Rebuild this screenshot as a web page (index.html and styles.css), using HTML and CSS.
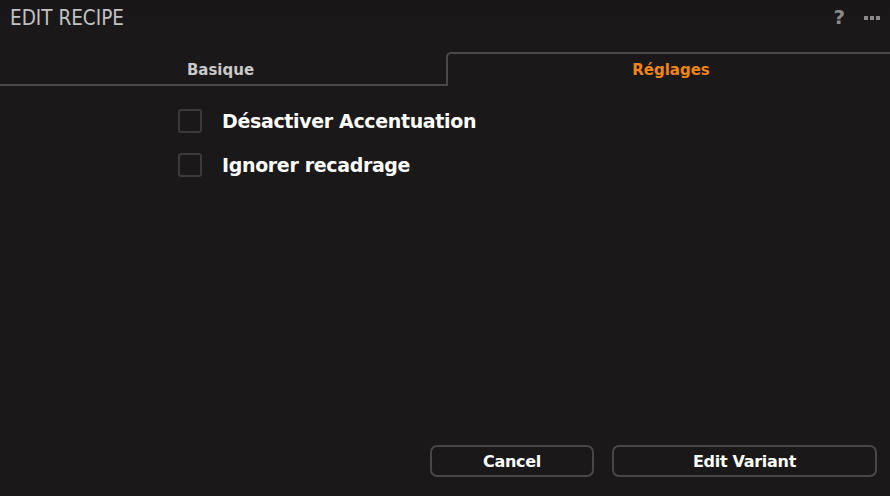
FILE: index.html
```html
<!DOCTYPE html>
<html lang="fr">
<head>
<meta charset="utf-8">
<title>Edit Recipe</title>
<link rel="stylesheet" href="styles.css">
</head>
<body>
<div class="panel">
  <header class="titlebar">
    <span class="title">EDIT RECIPE</span>
    <div class="tools">
      <span class="help">?</span>
      <svg class="more" width="16" height="4" viewBox="0 0 16 4"><rect x="0" y="0" width="4" height="4" fill="#8a8a8a"/><rect x="6" y="0" width="4" height="4" fill="#8a8a8a"/><rect x="12" y="0" width="4" height="4" fill="#8a8a8a"/></svg>
    </div>
  </header>
  <nav class="tabs">
    <div class="tab tab-left"><span>Basique</span></div>
    <div class="tab tab-active"><span>Réglages</span></div>
  </nav>
  <main class="content">
    <label class="option"><span class="box"></span><span class="label">Désactiver Accentuation</span></label>
    <label class="option"><span class="box"></span><span class="label">Ignorer recadrage</span></label>
  </main>
  <footer class="actions">
    <button class="btn btn-cancel">Cancel</button>
    <button class="btn btn-edit">Edit Variant</button>
  </footer>
</div>
</body>
</html>
```
FILE: styles.css
```css
* { box-sizing: border-box; }
html, body { margin: 0; padding: 0; }
body {
  background: #1b1819;
  font-family: "DejaVu Sans", "Open Sans", sans-serif;
  color: #fff;
}
.panel {
  width: 890px;
  height: 496px;
  display: flex;
  flex-direction: column;
}
.titlebar {
  height: 36px;
  display: flex;
  align-items: center;
  justify-content: space-between;
  padding: 0 10px;
  background: linear-gradient(#181617, #1b1819);
}
.title {
  font-family: "DejaVu Sans Condensed", "DejaVu Sans", sans-serif;
  font-stretch: condensed;
  font-size: 20.5px;
  color: #c2c2c2;
  margin-top: -1px;
}
.tools {
  display: flex;
  align-items: center;
  gap: 19px;
}
.help {
  font-weight: bold;
  font-size: 20px;
  color: #8a8a8a;
  margin-top: -2px;
}
.more { display: block; }
.tabs {
  height: 50px;
  display: flex;
}
.tab {
  display: flex;
  align-items: center;
  justify-content: center;
  font-weight: bold;
  font-size: 15px;
}
.tab-left {
  width: 448px;
  border-bottom: 2px solid #4a4849;
  padding-top: 20px;
  padding-right: 7px;
  color: #c8c8c8;
}
.tab-active {
  flex: 1;
  margin-top: 16px;
  margin-left: -2px;
  border-top: 2px solid #4a4849;
  border-left: 2px solid #4a4849;
  border-top-left-radius: 5px;
  color: #f08516;
  padding-left: 4px;
}
.content {
  flex: 1;
  padding: 23px 0 0 178px;
  display: flex;
  flex-direction: column;
  gap: 20px;
}
.option {
  display: flex;
  align-items: center;
  gap: 20px;
  height: 24px;
}
.box {
  width: 24px;
  height: 24px;
  border: 2px solid #3b393a;
  border-radius: 3px;
}
.label {
  font-weight: bold;
  font-size: 19px;
  color: #fff;
  letter-spacing: -0.35px;
}
.actions {
  display: flex;
  justify-content: flex-end;
  gap: 18px;
  padding: 0 13px 19px 0;
}
.btn {
  height: 32px;
  background: transparent;
  border: 2px solid #484647;
  border-radius: 7px;
  color: #fff;
  font-family: inherit;
  font-weight: bold;
  font-size: 16px;
  letter-spacing: -0.3px;
  padding: 0;
}
.btn-cancel { width: 164px; }
.btn-edit { width: 265px; }
```
